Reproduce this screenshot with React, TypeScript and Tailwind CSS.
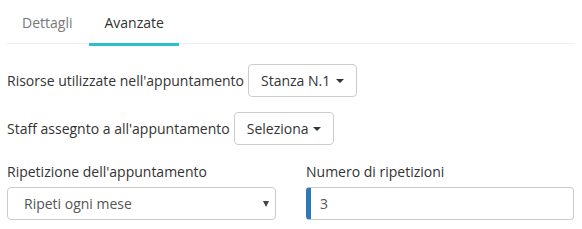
import React from "react";

export default function App() {
  return (
    <div
      className="w-[582px] h-[229px] bg-white px-[7px] pt-[3px] text-[14px] text-[#333]"
      style={{ fontFamily: '"Open Sans", sans-serif' }}
    >
      <div className="flex border-b border-[#eee]">
        <div className="px-[15px] py-[10px] leading-[20px] text-[#777] mr-[2px]">Dettagli</div>
        <div className="relative px-[15px] py-[10px] leading-[20px] text-[#333]">
          Avanzate
          <span className="absolute left-0 right-0 bottom-[-3px] h-[3px] bg-[#2bc0cd]" />
        </div>
      </div>

      <div className="mt-[20px] flex items-center">
        <span className="leading-[20px]">Risorse utilizzate nell'appuntamento</span>
        <button className="ml-[4px] h-[33px] px-[12px] flex items-center gap-[6px] border border-[#ccc] rounded-[4px] bg-white text-[#333] leading-[20px]">
          Stanza N.1
          <span className="w-0 h-0 border-x-[4px] border-x-transparent border-t-[4px] border-t-[#333]" />
        </button>
      </div>

      <div className="mt-[15px] flex items-center">
        <span className="leading-[20px]">Staff assegnto a all'appuntamento</span>
        <button className="ml-[4px] h-[33px] px-[12px] flex items-center gap-[4px] border border-[#ccc] rounded-[4px] bg-white text-[#333] leading-[20px]">
          Seleziona
          <span className="w-0 h-0 border-x-[4px] border-x-transparent border-t-[4px] border-t-[#333]" />
        </button>
      </div>

      <div className="mt-[17px] grid grid-cols-[269px_268px] gap-x-[30px]">
        <div>
          <div className="leading-[20px] mb-[5px]">Ripetizione dell'appuntamento</div>
          <div className="h-[33px] border border-[#ccc] rounded-[4px] flex items-center justify-between pl-[16px] pr-[6px] text-[#555]">
            <span>Ripeti ogni mese</span>
            <span className="w-0 h-0 border-x-[3px] border-x-transparent border-t-[6px] border-t-[#444]" />
          </div>
        </div>
        <div>
          <div className="leading-[20px] mb-[5px]">Numero di ripetizioni</div>
          <div className="h-[33px] border border-[#ccc] border-l-[5px] border-l-[#2f78b8] rounded-[4px] flex items-center pl-[9px] text-[#555]">
            3
          </div>
        </div>
      </div>
    </div>
  );
}
